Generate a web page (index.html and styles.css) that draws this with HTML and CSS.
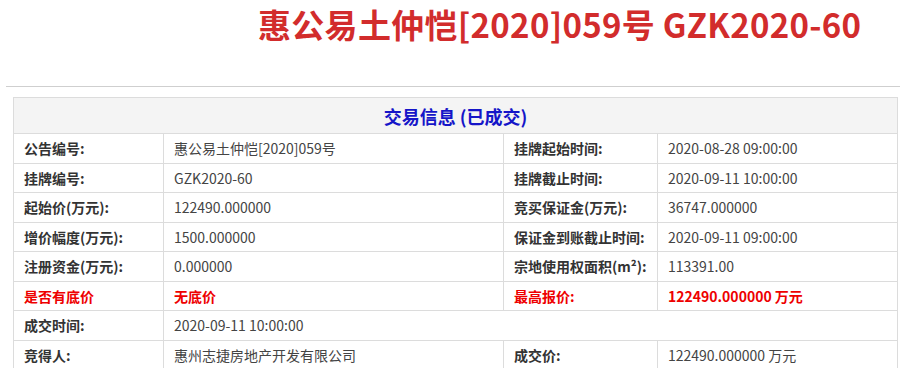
FILE: index.html
```html
<!DOCTYPE html>
<html lang="zh-CN">
<head>
<meta charset="utf-8">
<title>交易信息</title>
<link rel="stylesheet" href="styles.css">
</head>
<body>
<div class="page">
  <h1 class="title">惠公易土仲恺[2020]059号 GZK2020-60</h1>
  <div class="rule"></div>
  <table class="info">
    <colgroup>
      <col class="c1"><col class="c2"><col class="c3"><col class="c4">
    </colgroup>
    <thead>
      <tr><th colspan="4" class="head">交易信息 (已成交)</th></tr>
    </thead>
    <tbody>
      <tr><td class="lbl">公告编号:</td><td>惠公易土仲恺[2020]059号</td><td class="lbl">挂牌起始时间:</td><td>2020-08-28 09:00:00</td></tr>
      <tr><td class="lbl">挂牌编号:</td><td>GZK2020-60</td><td class="lbl">挂牌截止时间:</td><td>2020-09-11 10:00:00</td></tr>
      <tr><td class="lbl">起始价(万元):</td><td>122490.000000</td><td class="lbl">竞买保证金(万元):</td><td>36747.000000</td></tr>
      <tr><td class="lbl">增价幅度(万元):</td><td>1500.000000</td><td class="lbl">保证金到账截止时间:</td><td>2020-09-11 09:00:00</td></tr>
      <tr><td class="lbl">注册资金(万元):</td><td>0.000000</td><td class="lbl">宗地使用权面积(m²):</td><td>113391.00</td></tr>
      <tr class="hot"><td class="lbl">是否有底价</td><td class="strong">无底价</td><td class="lbl">最高报价:</td><td class="strong">122490.000000 万元</td></tr>
      <tr><td class="lbl">成交时间:</td><td colspan="3">2020-09-11 10:00:00</td></tr>
      <tr><td class="lbl">竞得人:</td><td>惠州志捷房地产开发有限公司</td><td class="lbl">成交价:</td><td>122490.000000 万元</td></tr>
    </tbody>
  </table>
</div>
</body>
</html>
```
FILE: styles.css
```css
html, body {
  margin: 0;
  padding: 0;
  background: #fff;
}
body {
  font-family: "Noto Sans CJK SC", "Noto Sans", sans-serif;
  color: #333;
  font-size: 14px;
}
.page {
  width: 900px;
}
.title {
  margin: 0;
  padding: 0 0 0 258px;
  font-size: 33px;
  letter-spacing: 0.3px;
  line-height: 48px;
  font-weight: 700;
  color: #d22c2c;
  height: 86px;
  box-sizing: border-box;
  white-space: nowrap;
}
.rule {
  margin-left: 6px;
  height: 1px;
  background: #cfcfcf;
}
.info {
  margin: 10px 0 0 13px;
  width: 884px;
  border-collapse: collapse;
  table-layout: fixed;
  border: 1px solid #dcdcdc;
}
.c1 { width: 150px; }
.c2 { width: 340px; }
.c3 { width: 154px; }
.c4 { width: 240px; }
.head {
  height: 35px;
  padding: 0;
  background: #f4f4f4;
  color: #1515c8;
  font-size: 18px;
  font-weight: 700;
  text-align: center;
  border: 1px solid #dcdcdc;
}
td {
  border: 1px solid #dcdcdc;
  height: 29.5px;
  padding: 0 0 0 10px;
  box-sizing: border-box;
  line-height: 20px;
  color: #444;
  white-space: nowrap;
}
td.lbl {
  font-weight: 700;
  color: #333;
}
.hot td {
  color: #e00;
  font-weight: 700;
}
```
